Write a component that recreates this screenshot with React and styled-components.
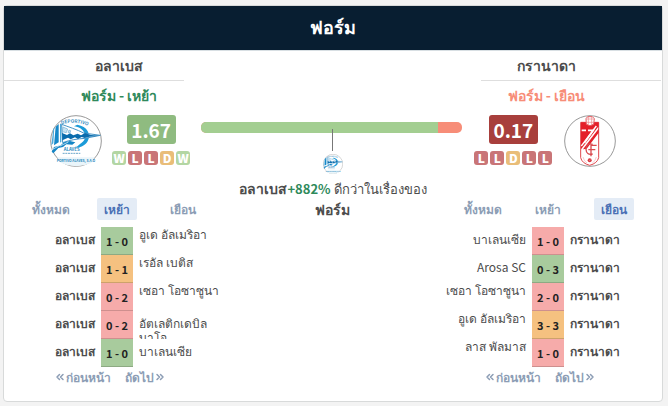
import { useId, useState } from "react";
import { ChevronsLeft, ChevronsRight } from "lucide-react";
import styled, { createGlobalStyle } from "styled-components";

const abas = ["ทั้งหมด", "เหย้า", "เยือน"];

const alaves = {
  name: "อลาเบส",
  label: "ฟอร์ม - เหย้า",
  color: "#2f8a5b",
  score: "1.67",
  scoreColor: "#8fbb80",
  form: ["W", "L", "L", "D", "W"],
  tab: 1,
  games: [
    { rival: "อูเด อัลเมริอา", score: "1 - 0", result: "W", top: true },
    { rival: "เรอัล เบติส", score: "1 - 1", result: "D", top: true },
    { rival: "เซอา โอซาซูนา", score: "0 - 2", result: "L", top: true },
    { rival: "อัตเลติกเดบิลบาโอ", score: "0 - 2", result: "L", long: true },
    { rival: "บาเลนเซีย", score: "1 - 0", result: "W" },
  ],
};

const granada = {
  name: "กรานาดา",
  label: "ฟอร์ม - เยือน",
  color: "#f78d78",
  score: "0.17",
  scoreColor: "#a83f3c",
  form: ["L", "L", "D", "L", "L"],
  tab: 2,
  games: [
    { rival: "บาเลนเซีย", score: "1 - 0", result: "L" },
    { rival: "Arosa SC", score: "0 - 3", result: "W" },
    { rival: "เซอา โอซาซูนา", score: "2 - 0", result: "L", top: true },
    { rival: "อูเด อัลเมริอา", score: "3 - 3", result: "D", top: true },
    { rival: "ลาส พัลมาส", score: "1 - 0", result: "L", top: true },
  ],
};

const formColors = { W: "#b3d6a3", D: "#e9bd78", L: "#c97577" };
const gameColors = { W: "#a8cb9d", D: "#f5c180", L: "#f6abaa" };

function AlavesCrest({ size }) {
  const arc = useId();

  return (
    <svg width={size} height={size} viewBox="0 0 156 156" aria-hidden="true">
      <circle cx="78" cy="78" r="76" fill="#fff" stroke="#999" strokeWidth="3" />
      <path id={arc} d="M24 33 Q70 11 124 37" fill="none" />
      <text fontSize="14" fontWeight="700" fill="#3d8fc2" textAnchor="middle">
        <textPath href={`#${arc}`} startOffset="50%">DEPORTIVO</textPath>
      </text>
      <path d="M82 29 C112 34 124 57 113 79 C106 91 92 98 77 98 L90 87 C105 78 109 65 103 54 C98 42 86 36 72 34Z" fill="#1c9bd8" />
      <path d="M17 35 L26 27 L26 82 L12 91Z" fill="#1688c8" />
      <path d="M10 41 L13 38 L10 85 L4 91Z M30 26 L34 26 L34 80 L30 83Z" fill="#4daadb" />
      <path d="M35 28 C54 35 82 44 101 54 L151 61 L105 70 C82 72 61 74 38 83Z" fill="#fff" stroke="#4595c7" strokeWidth="3" />
      <path d="M36 54 L51 60 L60 55 L70 61 L83 56 L93 61 L105 54 L123 60 L149 62 L118 65 L104 69 L95 66 L84 72 L75 67 L62 73 L54 68 L37 76Z" fill="#096cad" />
      <path d="M39 36 L53 42 L49 53 L37 50Z M57 45 L62 47 L60 54 L54 53Z" fill="#c5e3f2" stroke="#73afd3" strokeWidth="2" />
      <path d="M5 110 L12 96 L32 91 L42 82 L60 78 L76 82 L67 89 L49 88 L39 96 L25 99 L10 115Z" fill="#1485c5" />
      <path d="M30 93 L55 81 M6 104 L30 91" stroke="#fff" strokeWidth="2" />
      <text x="65" y="109" textAnchor="middle" fontSize="13" fontWeight="700" fill="#328bbf">ALAVÉS</text>
      <path d="M38 115 H91" stroke="#6ca8ca" strokeWidth="3" strokeDasharray="6 2" />
      <path d="M22 127 H133 L124 144 Q79 164 33 144Z" fill="#eaf5fa" />
      <text x="78" y="141" textAnchor="middle" fontSize="10" fontWeight="700" fill="#2586bd">PORTIVO ALAVES, S.A.D</text>
    </svg>
  );
}

function GranadaCrest({ size }) {
  return (
    <svg width={size} height={size} viewBox="0 0 156 156" aria-hidden="true">
      <circle cx="78" cy="78" r="76" fill="#fff" stroke="#999" strokeWidth="3" />
      <path d="M50 22 H104 V128 Q100 145 77 151 Q54 145 50 128Z" fill="#fff" stroke="#e0484e" strokeWidth="3" />
      <path d="M51 22 H104 V34 L51 103Z" fill="#e4202a" />
      <path d="M53 46 H66 M72 46 H88 L61 84" fill="none" stroke="#fff" strokeWidth="5" />
      <path d="M52 93 L97 33" stroke="#fff" strokeWidth="4" />
      <path d="M57 103 L104 41 V53 L68 101Z" fill="#e4202a" />
      <path d="M66 11 L71 5 H85 L91 11 L89 28 L78 32 L67 28Z" fill="#fff" stroke="#e75b60" strokeWidth="3" />
      <path d="M67 12 H90 M73 6 V29 M83 6 V29 M68 22 H89" stroke="#ed8588" strokeWidth="2" />
      <path d="M86 88 Q66 83 66 103 Q67 121 86 117 M81 124 V91 H98 M73 104 H94" fill="none" stroke="#d94b50" strokeWidth="4" />
      <circle cx="77" cy="136" r="6" fill="#d9343c" />
      <path d="M74 133 L80 139 M80 133 L74 139" stroke="#f5b2b4" strokeWidth="1" />
      <path d="M57 126 Q60 139 69 144 M97 126 Q94 139 85 144" fill="none" stroke="#f1b1b3" strokeWidth="2" />
    </svg>
  );
}

function Team({ team, away, crest }) {
  const [tab, setTab] = useState(team.tab);

  return (
    <Side $away={away}>
      <TeamName $away={away}>{team.name}</TeamName>
      <FormLabel $color={team.color}>{team.label}</FormLabel>
      <Summary $away={away}>
        {crest}
        <Points>
          <Score $color={team.scoreColor}>{team.score}</Score>
          <FormList>
            {team.form.map((result, index) => (
              <FormBadge key={index} $result={result}>
                {result}
              </FormBadge>
            ))}
          </FormList>
        </Points>
      </Summary>
      <Tabs $away={away}>
        {abas.map((aba, index) => (
          <Tab key={aba} $active={tab === index} onClick={() => setTab(index)}>
            {aba}
          </Tab>
        ))}
      </Tabs>
      <Games $away={away}>
        <colgroup>
          <col width={away ? "" : "97"} />
          <col width="32" />
          <col width={away ? "97" : ""} />
        </colgroup>
        <tbody>
          {team.games.map((game, index) => {
            const own = <OwnCell $away={away}>{team.name}</OwnCell>;
            const rival = (
              <RivalCell $away={away}>
                <Rival $top={game.top} $long={game.long}>
                  {game.rival}
                </Rival>
              </RivalCell>
            );
            return (
              <tr key={index}>
                {away ? rival : own}
                <ResultCell $result={game.result}>{game.score}</ResultCell>
                {away ? own : rival}
              </tr>
            );
          })}
        </tbody>
      </Games>
      <Pager $away={away}>
        <a href="#prev">
          <ChevronsLeft size={12} strokeWidth={3} />
          ก่อนหน้า
        </a>
        <a href="#next">
          ถัดไป
          <ChevronsRight size={12} strokeWidth={3} />
        </a>
      </Pager>
    </Side>
  );
}

export default function App() {
  return (
    <>
      <GlobalStyle />
      <Card>
        <Header>ฟอร์ม</Header>
        <Columns>
          <Team team={alaves} crest={<AlavesCrest size={52} />} />
          <Middle>
            <Bar>
              <BarHome />
            </Bar>
            <Pointer />
            <AlavesCrest size={20} />
            <Verdict>
              <b>อลาเบส</b>
              <strong>+882%</strong> ดีกว่าในเรื่องของ <b>ฟอร์ม</b>
            </Verdict>
          </Middle>
          <Team team={granada} away crest={<GranadaCrest size={52} />} />
        </Columns>
      </Card>
    </>
  );
}

const GlobalStyle = createGlobalStyle`
  * {
    box-sizing: border-box;
  }

  body {
    margin: 0;
    padding: 5px 5px 5px 3px;
    background-color: #f3f3f3;
    color: #4c4c4c;
    font-family: "Noto Sans CJK SC", "Noto Sans", sans-serif;
    font-size: 12px;
  }

  svg {
    display: block;
    flex: none;
  }
`;

const Card = styled.main`
  background-color: #fff;
  border: 1px solid #d8dada;
  border-radius: 4px;
  padding-bottom: 14px;
`;

const Header = styled.h1`
  margin: 0;
  padding-bottom: 4px;
  background-color: #081e31;
  border-bottom: 1px solid #d8dfe3;
  color: #fff;
  font-size: 18px;
  line-height: 40px;
  text-align: center;
`;

const Columns = styled.div`
  display: grid;
  grid-template-columns: 35fr 30fr 35fr;
`;

const Side = styled.section`
  min-width: 0;
  padding-right: ${(props) => (props.$away ? "1px" : "0")};
`;

const TeamName = styled.h2`
  margin: 0;
  font-size: 14px;
  line-height: 29px;
  text-align: center;

  &::after {
    content: "";
    display: block;
    width: 180px;
    height: 1px;
    background-color: #dedede;
    margin-left: ${(props) => (props.$away ? "auto" : "0")};
  }
`;

const FormLabel = styled.h3`
  margin: 0;
  padding: 2px 0;
  color: ${(props) => props.$color};
  font-size: 14px;
  line-height: 24px;
  text-align: center;
`;

const Summary = styled.div`
  display: flex;
  flex-direction: ${(props) => (props.$away ? "row-reverse" : "row")};
  justify-content: center;
  gap: ${(props) => (props.$away ? "12px" : "10px")};
  padding: ${(props) => (props.$away ? "6px 2px 0 0" : "6px 0 0 2px")};
`;

const Points = styled.div`
  display: flex;
  flex-direction: column;
  align-items: center;
  gap: 7px;
`;

const Score = styled.div`
  width: 49px;
  border-radius: 3px;
  background-color: ${(props) => props.$color};
  color: #fff;
  font-size: 19px;
  font-weight: 700;
  line-height: 29px;
  text-align: center;
`;

const FormList = styled.div`
  display: flex;
  gap: 2px;
`;

const FormBadge = styled.span`
  width: 14px;
  border-radius: 3px;
  background-color: ${(props) => formColors[props.$result]};
  color: #fff;
  font-size: 12px;
  font-weight: 900;
  line-height: 14px;
  text-align: center;
`;

const Tabs = styled.nav`
  display: grid;
  grid-template-columns: repeat(3, 1fr);
  justify-items: center;
  padding: ${(props) => (props.$away ? "31px 14px 0 18px" : "31px 18px 0 14px")};
`;

const Tab = styled.button`
  border: 0;
  border-radius: 2px;
  padding: 0 7px;
  background-color: ${(props) => (props.$active ? "#e4ecf6" : "transparent")};
  color: ${(props) => (props.$active ? "#4a70b5" : "#8c9db5")};
  font: inherit;
  font-weight: 700;
  line-height: 22px;
  cursor: pointer;
`;

const Games = styled.table`
  width: 221px;
  margin-top: 7px;
  margin-left: ${(props) => (props.$away ? "auto" : "0")};
  border-collapse: collapse;
  table-layout: fixed;

  td {
    height: 28px;
    padding: 0;
  }
`;

const OwnCell = styled.td`
  text-align: ${(props) => (props.$away ? "left" : "right")};
  font-weight: 700;

  && {
    padding: 0 6px 3px;
  }
`;

const ResultCell = styled.td`
  background-color: ${(props) => gameColors[props.$result]};
  box-shadow: inset 0 -1px rgba(0, 0, 0, 0.16);
  color: #222;
  font-size: 11px;
  font-weight: 700;
  text-align: center;
`;

const RivalCell = styled.td`
  text-align: ${(props) => (props.$away ? "right" : "left")};

  && {
    padding: 0 6px;
  }
`;

const Rival = styled.div`
  height: 28px;
  padding-top: ${(props) => (props.$top ? "0" : "5px")};
  line-height: 14px;
  overflow: ${(props) => (props.$long ? "hidden" : "visible")};
`;

const Pager = styled.div`
  display: flex;
  justify-content: ${(props) => (props.$away ? "flex-end" : "flex-start")};
  gap: 14px;
  padding: ${(props) => (props.$away ? "0 65px 0 0" : "0 0 0 50px")};

  a {
    display: flex;
    align-items: center;
    color: #8c9db5;
    font-weight: 700;
    line-height: 20px;
    text-decoration: none;
  }
`;

const Middle = styled.section`
  display: flex;
  flex-direction: column;
  align-items: center;
  padding-top: 71px;
`;

const Bar = styled.div`
  align-self: flex-start;
  width: calc(100% + 63px);
  height: 11px;
  margin-left: -33px;
  border-radius: 5px;
  background-color: #f78d78;
  overflow: hidden;
`;

const BarHome = styled.div`
  width: 91%;
  height: 100%;
  background-color: #a3ce91;
`;

const Pointer = styled.div`
  width: 1px;
  height: 22px;
  margin: -4px 0 3px;
  background-color: #777;
  z-index: 1;
`;

const Verdict = styled.p`
  margin: 4px 0 0;
  font-size: 13px;
  line-height: 20px;
  text-align: center;

  b {
    font-size: 14px;
  }

  strong {
    color: #2f8a5b;
  }
`;
